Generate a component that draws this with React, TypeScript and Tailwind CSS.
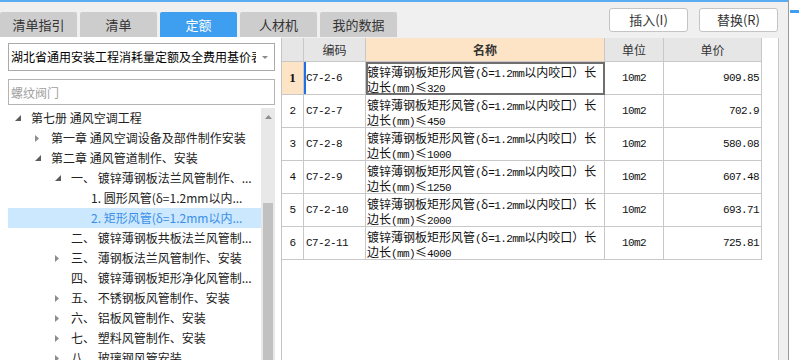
import React from 'react';

const tabs = ['清单指引', '清单', '定额', '人材机', '我的数据'];

type TreeNode = { level: number; arrow: 'open' | 'closed' | null; label: string; selected?: boolean };

const tree: TreeNode[] = [
  { level: 0, arrow: 'open', label: '第七册 通风空调工程' },
  { level: 1, arrow: 'closed', label: '第一章 通风空调设备及部件制作安装' },
  { level: 1, arrow: 'open', label: '第二章 通风管道制作、安装' },
  { level: 2, arrow: 'open', label: '一、 镀锌薄钢板法兰风管制作、...' },
  { level: 3, arrow: null, label: '1. 圆形风管(δ=1.2mm以内...' },
  { level: 3, arrow: null, label: '2. 矩形风管(δ=1.2mm以内...', selected: true },
  { level: 2, arrow: null, label: '二、 镀锌薄钢板共板法兰风管制...' },
  { level: 2, arrow: 'closed', label: '三、 薄钢板法兰风管制作、安装' },
  { level: 2, arrow: null, label: '四、 镀锌薄钢板矩形净化风管制...' },
  { level: 2, arrow: 'closed', label: '五、 不锈钢板风管制作、安装' },
  { level: 2, arrow: 'closed', label: '六、 铝板风管制作、安装' },
  { level: 2, arrow: 'closed', label: '七、 塑料风管制作、安装' },
  { level: 2, arrow: 'closed', label: '八、 玻璃钢风管安装' },
];

const indent = ['pl-[3px]', 'pl-[23px]', 'pl-[43px]', 'pl-[63px]'];

const rows = [
  { code: 'C7-2-6', size: '320', price: '909.85' },
  { code: 'C7-2-7', size: '450', price: '702.9' },
  { code: 'C7-2-8', size: '1000', price: '580.08' },
  { code: 'C7-2-9', size: '1250', price: '607.48' },
  { code: 'C7-2-10', size: '2000', price: '693.71' },
  { code: 'C7-2-11', size: '4000', price: '725.81' },
];

const mono = "[font-family:'Liberation_Mono',monospace] text-[11px] leading-[11px] tracking-[-0.6px]";

// ascii runs in a narrow mono face, like the half-width latin of the original
function Mixed({ text }: { text: string }) {
  const parts = text.split(/([\x20-\x7e]+)/);
  return (
    <>
      {parts.map((p, i) =>
        /^[\x20-\x7e]+$/.test(p) ? (
          <span key={i} className={mono}>
            {p}
          </span>
        ) : (
          <span key={i} className="leading-[12px]">
            {p}
          </span>
        )
      )}
    </>
  );
}

function OpenArrow() {
  return (
    <svg width="6" height="6" viewBox="0 0 6 6">
      <polygon points="6,0 6,6 0,6" fill="#5c5c5c" />
    </svg>
  );
}

function ClosedArrow() {
  return (
    <svg width="4" height="7" viewBox="0 0 4 7">
      <polygon points="0,0 4,3.5 0,7" fill="#8c8c8c" />
    </svg>
  );
}

const cols = 'grid grid-cols-[22px_62px_239px_59px_98px]';
const cell = 'border-r border-b border-[#c8c8c8]';

export default function App() {
  return (
    <div className="w-[799px] h-[360px] overflow-hidden flex bg-[#f0f0f0] text-[#333] [font-family:'Noto_Sans_CJK_SC',sans-serif]">
      <div className="w-[788px] flex flex-col">
        <div className="h-[2px] bg-[#5aabf2]" />

        {/* top bar: tabs + buttons */}
        <div className="h-[35px] flex justify-between shrink-0">
          <div className="flex items-end gap-[3px]">
            {tabs.map((t) => (
              <div
                key={t}
                className={
                  t === '定额'
                    ? 'w-[77px] h-[25px] rounded-t-[2px] bg-[#3e9ef0] text-white text-[13px] flex items-center justify-center'
                    : 'w-[77px] h-[25px] rounded-t-[2px] bg-[#cdcdcd] text-[#333] text-[13px] flex items-center justify-center'
                }
              >
                {t}
              </div>
            ))}
          </div>
          <div className="flex gap-[11px] mt-[6px] mr-[10px]">
            <button className="w-[79px] h-[24px] bg-white border border-[#c4c4c4] rounded-[3px] text-[13px] text-[#333]">
              插入(I)
            </button>
            <button className="w-[79px] h-[24px] bg-white border border-[#c4c4c4] rounded-[3px] text-[13px] text-[#333]">
              替换(R)
            </button>
          </div>
        </div>

        <div className="flex-1 flex min-h-0">
          {/* left panel */}
          <div className="w-[281px] bg-white flex flex-col pt-[6px] pl-[8px] pr-[6px] min-h-0">
            <div className="h-[28px] border border-[#aaaaaa] flex items-center">
              <div className="flex-1 overflow-hidden whitespace-nowrap pl-[2px] text-[12px] text-black leading-[16px]">
                湖北省通用安装工程消耗量定额及全费用基价表
              </div>
              <div className="w-[18px] flex justify-center">
                <svg width="6" height="3" viewBox="0 0 6 3">
                  <polygon points="0,0 6,0 3,3" fill="#8a8a8a" />
                </svg>
              </div>
            </div>
            <input
              readOnly
              placeholder="螺纹阀门"
              className="mt-[8px] h-[26px] border border-[#b4b4b4] pl-[2px] text-[12px] outline-none placeholder:text-[#a0a0a0]"
            />

            <div className="mt-[3px] flex-1 flex min-h-0 overflow-hidden">
              <div className="flex-1 flex flex-col">
                {tree.map((n) => (
                  <div
                    key={n.label}
                    className={
                      (n.selected ? 'bg-[#cce8ff] text-[#3a8ee6] ' : 'text-[#222] ') +
                      'h-[20px] shrink-0 flex items-center text-[12px] leading-[16px] whitespace-nowrap ' +
                      indent[n.level]
                    }
                  >
                    <div className="w-[20px] shrink-0 flex items-center pl-[4px]">
                      {n.arrow === 'open' && <OpenArrow />}
                      {n.arrow === 'closed' && <ClosedArrow />}
                    </div>
                    <span>{n.label}</span>
                  </div>
                ))}
              </div>
              <div className="w-[14px] bg-[#e8e8e8] flex flex-col items-center">
                <div className="h-[17px] flex items-center justify-center">
                  <svg width="7" height="4" viewBox="0 0 7 4">
                    <polygon points="0,4 7,4 3.5,0" fill="#8e8e8e" />
                  </svg>
                </div>
                <div className="mt-[78px] w-[10px] flex-1 bg-[#c1c1c1]" />
              </div>
            </div>
          </div>

          {/* table panel */}
          <div className="flex-1 pt-[1px] flex">
            <div className="flex-1 flex bg-white border-l border-[#c4c4c4]">
              <div className="flex-1">
                <div className={cols + ' h-[24px] text-[12px]'}>
                  <div className={cell + ' bg-[#e6e6e6]'} />
                  <div className={cell + ' bg-[#e6e6e6] flex items-center justify-center'}>编码</div>
                  <div className={cell + ' bg-[#fde4c6] flex items-center justify-center font-bold'}>名称</div>
                  <div className={cell + ' bg-[#e6e6e6] flex items-center justify-center'}>单位</div>
                  <div className={cell + ' bg-[#e6e6e6] flex items-center justify-center'}>单价</div>
                </div>
                {rows.map((r, i) => (
                  <div key={r.code} className={cols + ' h-[33px] text-[12px] text-[#111]'}>
                    {i === 0 ? (
                      <div className={cell + " bg-[#fde4c6] flex items-center justify-center font-bold text-[13px] [font-family:'Liberation_Serif',serif]"}>
                        1
                      </div>
                    ) : (
                      <div className={cell + ' flex items-center justify-center'}>
                        <span className={mono}>{i + 1}</span>
                      </div>
                    )}
                    <div className={cell + ' flex items-center pl-[2px]' + (i === 0 ? ' shadow-[inset_2px_0_0_#1f6fe5]' : '')}>
                      <Mixed text={r.code} />
                    </div>
                    <div
                      className={
                        cell +
                        ' pl-[1px] pt-[2px] whitespace-nowrap overflow-hidden' +
                        (i === 0 ? ' outline-2 outline-offset-[-2px] outline-[#6e6e6e]' : '')
                      }
                    >
                      <div className="h-[15px] leading-[15px]">
                        <Mixed text="镀锌薄钢板矩形风管(" />
                        <span className="leading-[12px]">δ</span>
                        <Mixed text="=1.2mm以内咬口）长" />
                      </div>
                      <div className="h-[15px] leading-[15px]">
                        <Mixed text={'边长(mm)≤' + r.size} />
                      </div>
                    </div>
                    <div className={cell + ' flex items-center justify-center'}>
                      <Mixed text="10m2" />
                    </div>
                    <div className={cell + ' flex items-center justify-end pr-[2px]'}>
                      <Mixed text={r.price} />
                    </div>
                  </div>
                ))}
              </div>
              <div className="w-[10px] bg-[#f0f0f0] border-l border-[#c8c8c8]" />
            </div>
          </div>
        </div>
      </div>

      {/* right edge of neighbouring pane */}
      <div className="w-[11px] border-l border-[#9a9a9a] bg-white pt-[10px]">
        <div className="h-[3px] ml-[1px] bg-[#3e9ef0]" />
      </div>
    </div>
  );
}
